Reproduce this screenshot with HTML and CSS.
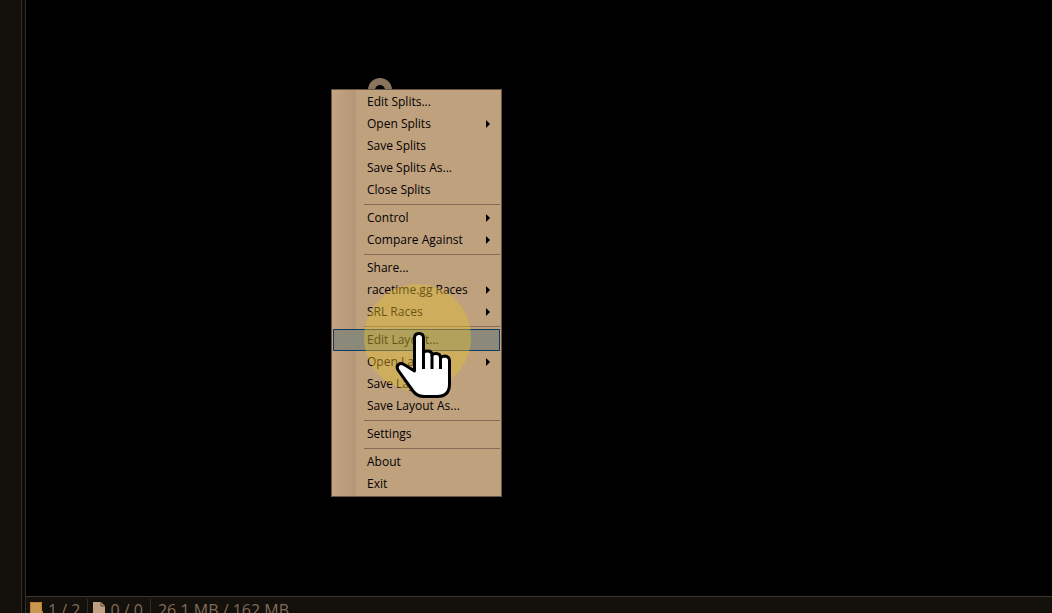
FILE: index.html
```
<!DOCTYPE html>
<html lang="en">
<head>
<meta charset="utf-8">
<title>Layout menu</title>
<link rel="stylesheet" href="styles.css">
</head>
<body>
<div class="app">
  <aside class="side"></aside>
  <div class="splitter"></div>
  <div class="main">
    <main class="canvas">
      <svg class="ring" width="24" height="24" viewBox="0 0 24 24"><circle cx="12" cy="12" r="8.5" fill="none" stroke="#8b745e" stroke-width="7"/></svg>
      <div class="menu" role="menu">
        <button class="item" role="menuitem">Edit Splits...</button>
        <button class="item sub" role="menuitem">Open Splits</button>
        <button class="item" role="menuitem">Save Splits</button>
        <button class="item" role="menuitem">Save Splits As...</button>
        <button class="item" role="menuitem">Close Splits</button>
        <hr class="sep">
        <button class="item sub" role="menuitem">Control</button>
        <button class="item sub" role="menuitem">Compare Against</button>
        <hr class="sep">
        <button class="item" role="menuitem">Share...</button>
        <button class="item sub" role="menuitem">racetime.gg Races</button>
        <button class="item sub" role="menuitem">SRL Races</button>
        <hr class="sep">
        <button class="item active" role="menuitem">Edit Layout...</button>
        <button class="item sub" role="menuitem">Open Layout</button>
        <button class="item" role="menuitem">Save Layout</button>
        <button class="item" role="menuitem">Save Layout As...</button>
        <hr class="sep">
        <button class="item" role="menuitem">Settings</button>
        <hr class="sep">
        <button class="item" role="menuitem">About</button>
        <button class="item" role="menuitem">Exit</button>
      </div>
      <div class="spot"></div>
      <svg class="hand" width="64" height="70" viewBox="390 330 64 70">
        <path d="M414.500 371V338Q414.500 333.500 419 333.500Q423.500 333.500 423.500 338V353Q424 351 427.500 351Q432 351 432 355Q433 353.500 436 353.500Q440.500 353.500 440.500 358Q442 356 445 356Q449.500 356.500 449.500 361V384Q449.500 396.500 437 396.500H424Q417 396.500 413 391L398 370Q396 366.500 398.500 364.500Q401 362.500 404 364.500Z" fill="#fff" stroke="#000" stroke-width="3" stroke-linejoin="round"/>
        <path d="M423.500 352V369M432 355V369M440.500 358V369" fill="none" stroke="#000" stroke-width="3"/>
      </svg>
    </main>
    <footer class="status">
      <div class="cell first">
        <svg width="14" height="18" viewBox="0 0 14 18"><path d="M0 0H12V9H13V18H0Z" fill="#c8984f"/><path d="M.5 18V.5H11.500V9.500H12.500V18" fill="none" stroke="#c08028"/></svg>
        <span>1 / 2</span>
      </div>
      <div class="cell second">
        <svg width="13" height="18" viewBox="0 0 13 18"><path d="M0 0H8L12 4V18H0Z" fill="#c09f82"/><path d="M8 0V4H12" fill="none" stroke="#5c4736"/></svg>
        <span>0 / 0</span>
      </div>
      <div class="cell">
        <span>26.1 MB / 162 MB</span>
      </div>
    </footer>
  </div>
</div>
</body>
</html>
```
FILE: styles.css
```
* { box-sizing: border-box; }
body {
  margin: 0;
  background: #000;
  font-family: "Open Sans", "Noto Sans", sans-serif;
}
.app {
  display: flex;
  height: 100vh;
  overflow: hidden;
}
.side {
  flex: none;
  width: 21px;
  background: #14100c;
}
.splitter {
  flex: none;
  width: 5px;
  background: #0c0b0a;
  border: solid #352c25;
  border-width: 0 1px;
}
.main {
  flex: 1;
  min-width: 0;
  display: flex;
  flex-direction: column;
}
.canvas {
  position: relative;
  flex: 1;
  min-height: 0;
  background: #000;
}
.ring {
  position: absolute;
  left: 342px;
  top: 78px;
}
.menu {
  position: absolute;
  left: 305px;
  top: 89px;
  width: 171px;
  padding: 1px;
  border: 1px solid #6b5645;
  background: linear-gradient(90deg, #c3a382, #b59677 24px, #c0a17e 24px);
}
.item {
  display: flex;
  align-items: center;
  justify-content: space-between;
  width: 100%;
  height: 22px;
  padding: 0 9px 0 33px;
  border: 1px solid transparent;
  background: none;
  color: #000;
  font: 12px/20px "Open Sans", "Noto Sans", sans-serif;
  text-align: left;
  white-space: nowrap;
}
.sub::after {
  content: "";
  border: 4px solid transparent;
  border-left-color: #000;
  border-right-width: 0;
}
.active {
  background: #8b8a7a;
  border-color: #123a5e;
}
.sep {
  height: 1px;
  margin: 3px 0 2px 31px;
  border: 0;
  background: #836b57;
}
.spot {
  position: absolute;
  left: 338px;
  top: 284px;
  width: 107px;
  height: 107px;
  border-radius: 50%;
  background: rgba(224, 189, 51, 0.45);
}
.hand {
  position: absolute;
  left: 364px;
  top: 330px;
}
.status {
  flex: none;
  display: flex;
  align-items: flex-start;
  height: 17px;
  overflow: hidden;
  border-top: 1px solid #40352c;
  background: #14100c;
  color: #806b57;
  font-size: 16px;
  line-height: 22px;
  white-space: nowrap;
}
.cell {
  display: flex;
  gap: 4px;
  height: 26px;
  margin-top: 2px;
  padding: 0 7px;
}
.cell svg {
  flex: none;
  margin-top: 3px;
}
.first, .second {
  border-right: 1px solid #352c25;
}
.first {
  padding-left: 4px;
}
.second {
  padding-left: 5px;
}
```
